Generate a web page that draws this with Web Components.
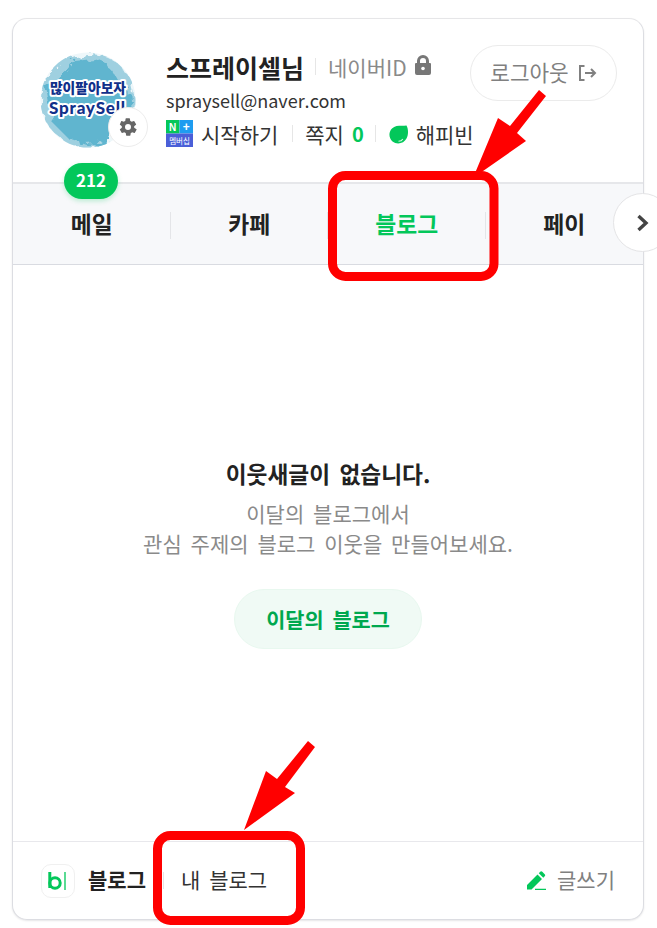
<!DOCTYPE html>
<html lang="ko">
<head>
<meta charset="utf-8">
<title>네이버 프로필</title>
<style>
html,body{margin:0;height:928px;overflow:hidden;background:#fff}
body{font-family:"Noto Sans CJK KR","Noto Sans",sans-serif;color:#222;padding:18px 13px 0 12px;box-sizing:border-box;position:relative}
</style>
</head>
<body>
<nv-card>
  <nv-profile slot="top" name="스프레이셀님" email="spraysell@naver.com"></nv-profile>
  <nv-tabs slot="top" count="212">
    <nv-tab>메일</nv-tab>
    <nv-tab>카페</nv-tab>
    <nv-tab active>블로그</nv-tab>
    <nv-tab last>페이</nv-tab>
  </nv-tabs>
  <nv-empty title-text="이웃새글이 없습니다." action="이달의 블로그">이달의 블로그에서<br>관심 주제의 블로그 이웃을 만들어보세요.</nv-empty>
  <nv-footer slot="bottom"></nv-footer>
</nv-card>
<nv-marks></nv-marks>

<script>
const card_template = document.createElement('template');
card_template.innerHTML = `
<style>
:host{display:flex;flex-direction:column;width:632px;height:902px;box-sizing:border-box;border:1px solid #dcdde2;border-top-color:#e6e6e8;border-radius:15px;background:#fff;box-shadow:0 1px 2px rgba(0,0,20,.10)}
main{flex:1;display:flex;min-height:0}
</style>
<slot name="top"></slot>
<main><slot></slot></main>
<slot name="bottom"></slot>`;

class nvCard extends HTMLElement{
  constructor(){
    super();
    this.attachShadow({mode:"open"});
    this.shadowRoot.appendChild(card_template.content.cloneNode(true));
  }
}

const profile_template = document.createElement('template');
profile_template.innerHTML = `
<style>
:host{display:flex;height:163px;box-sizing:border-box;padding:30px 26px 0 27px;color:#222}
#photo{position:relative;width:96px;height:96px;margin-top:3px;flex:none}
#photo svg{display:block}
#gear{position:absolute;left:68px;top:55px;width:40px;height:40px;box-sizing:border-box;border:1px solid #ececec;border-radius:50%;background:#fff;display:flex;align-items:center;justify-content:center}
#info{flex:1;margin-left:30px;min-width:0}
.row{display:flex;align-items:center;white-space:nowrap}
#first{height:35px}
#name{font-size:25px;font-weight:700}
.sep{width:1px;height:17px;background:#e6e6e6;flex:none}
#first .sep{margin:0 12px 0 11px}
#naver{font-size:21px;color:#8a8a8a}
#first svg{margin-left:7px;margin-top:-3px}
#email{height:31px;font-size:18px;color:#333}
#third{height:37px;font-size:21px;color:#333}
#third .sep{margin:0 13px 0 11px}
#third #sep1{margin:0 12px 0 14px}
#plus{margin-right:8px;flex:none}
#zero{color:#03c75a;font-weight:700;margin-left:8px;font-size:20px}
#leaf{margin-right:8px;flex:none}
#logout{flex:none;align-self:flex-start;margin-top:-4px;width:147px;height:56px;box-sizing:border-box;border:1px solid #ebebeb;border-radius:28px;background:#fff;display:flex;align-items:center;justify-content:center;gap:9px;font-size:21.300px;color:#808080;font-family:inherit;padding:0}
#logout span{padding-bottom:3px}
</style>
<div id="photo">
  <svg width="96" height="96" viewBox="0 0 96 96">
    <defs>
      <clipPath id="round"><circle cx="48" cy="48" r="47.500"/></clipPath>
      <filter id="rough" x="-10%" y="-10%" width="120%" height="120%">
        <feTurbulence type="fractalNoise" baseFrequency="0.09" numOctaves="3" seed="7"/>
        <feDisplacementMap in="SourceGraphic" scale="18"/>
      </filter>
    </defs>
    <g clip-path="url(#round)">
      <rect width="96" height="96" fill="#eef7fa"/>
      <g filter="url(#rough)">
        <circle cx="48" cy="48" r="47" fill="#9fd0e0"/>
      </g>
      <g filter="url(#rough)">
        <path d="M8 36 24 22 34 8 52 6 68 12 76 26 90 36 92 62 78 72 72 90 46 92 28 86 14 72Z" fill="#61b5cf"/>
      </g>
      <text x="48" y="41" text-anchor="middle" font-family="Noto Sans CJK KR" font-weight="900" font-size="13.800" fill="#11308a" stroke="#fff" stroke-width="4" stroke-linejoin="round" paint-order="stroke">많이팔아보자</text>
      <text x="9" y="62" font-family="Lato" font-weight="900" font-size="17" fill="#11308a" stroke="#fff" stroke-width="4" stroke-linejoin="round" paint-order="stroke" letter-spacing="0.800">SpraySell</text>
    </g>
  </svg>
  <span id="gear">
    <svg width="20" height="20" viewBox="0 0 24 24"><path fill="#666" fill-rule="evenodd" d="M19.400 13a7.600 7.600 0 0 0 0-2l2.200-1.700a.5.5 0 0 0 .1-.7l-2.100-3.600a.5.5 0 0 0-.6-.2l-2.600 1a7.600 7.600 0 0 0-1.700-1l-.4-2.800a.5.5 0 0 0-.5-.4H9.600a.5.5 0 0 0-.5.4l-.4 2.800a7.600 7.600 0 0 0-1.700 1l-2.600-1a.5.5 0 0 0-.6.2L2.300 8.600a.5.5 0 0 0 .1.7L4.600 11a7.600 7.600 0 0 0 0 2l-2.200 1.700a.5.5 0 0 0-.1.7l2.100 3.600c.1.2.4.3.6.2l2.600-1c.5.4 1.100.7 1.700 1l.4 2.800c0 .2.3.4.5.4h4.200c.2 0 .5-.2.5-.4l.4-2.800c.6-.3 1.200-.6 1.700-1l2.600 1c.2.1.5 0 .6-.2l2.100-3.600a.5.5 0 0 0-.1-.7ZM12 15.600a3.600 3.600 0 1 1 0-7.200 3.600 3.600 0 0 1 0 7.200Z"/></svg>
  </span>
</div>
<div id="info">
  <div class="row" id="first">
    <span id="name"></span><i class="sep"></i><span id="naver">네이버ID</span>
    <svg width="18" height="20" viewBox="0 0 18 20"><path fill="#777" d="M3 8V6a6 6 0 0 1 12 0v2h1a1 1 0 0 1 1 1v9a2 2 0 0 1-2 2H3a2 2 0 0 1-2-2V9a1 1 0 0 1 1-1Zm3 0h6V6a3 3 0 0 0-6 0Z"/><circle cx="9" cy="13.500" r="1.800" fill="#fff"/></svg>
  </div>
  <div class="row" id="email"></div>
  <div class="row" id="third">
    <svg id="plus" width="27" height="27" viewBox="0 0 27 27">
      <rect width="13.500" height="13.500" fill="#03c75a"/><rect x="13.500" width="13.500" height="13.500" fill="#1e9cf0"/><rect y="13.500" width="27" height="13.500" fill="#4a5fd8"/>
      <text x="6.700" y="10.500" text-anchor="middle" font-family="Liberation Sans" font-weight="700" font-size="10" fill="#fff">N</text>
      <text x="20.200" y="11" text-anchor="middle" font-family="Liberation Sans" font-weight="700" font-size="12" fill="#fff">+</text>
      <text x="13.500" y="24" text-anchor="middle" font-family="Noto Sans CJK KR" font-size="7.500" fill="#fff">멤버십</text>
    </svg>
    <span>시작하기</span><i class="sep" id="sep1"></i><span>쪽지</span><span id="zero">0</span><i class="sep"></i>
    <svg id="leaf" width="19" height="20" viewBox="0 0 19 20"><path fill="#03c75a" d="M17.500 1.500C19.500 5 19.500 11 17.500 14.500 15 19.500 8 21 3.500 17.500-.5 14-.5 8 3 4.500 7 .5 13 2.500 17.500 1.500Z"/><path fill="none" stroke="#d5f6e3" stroke-width="1.100" d="M9.500 17.300c2 0 3.600-.9 4.300-2.300"/></svg>
    <span>해피빈</span>
  </div>
</div>
<button id="logout" type="button">
  <span>로그아웃</span>
  <svg width="19" height="18" viewBox="0 0 19 18" fill="none" stroke="#808080" stroke-width="2"><path d="M6.500 2H2v14h4.500"/><path d="M7 9h10M13 5l4 4-4 4"/></svg>
</button>`;

class nvProfile extends HTMLElement{
  constructor(){
    super();
    this.attachShadow({mode:"open"});
    this.shadowRoot.appendChild(profile_template.content.cloneNode(true));
    this.shadowRoot.getElementById("name").innerText = this.getAttribute("name");
    this.shadowRoot.getElementById("email").innerText = this.getAttribute("email");
  }
}

const tabs_template = document.createElement('template');
tabs_template.innerHTML = `
<style>
:host{display:flex;position:relative;height:83px;box-sizing:border-box;background:#f7f8fa;border-top:2px solid #e6e7ea;border-bottom:1px solid #d9dbe1}
#count{position:absolute;left:51px;top:-21px;width:54px;height:36px;box-sizing:border-box;padding-bottom:3px;border-radius:18px;background:#03c75a;color:#fff;font-size:17px;font-weight:700;display:flex;align-items:center;justify-content:center;box-shadow:0 2px 5px rgba(3,199,90,.25)}
#next{position:absolute;left:600px;top:9px;width:59px;height:59px;box-sizing:border-box;border:1px solid #e4e4e6;border-radius:50%;background:#fff;display:flex;align-items:center;padding:0 0 0 22px}
</style>
<slot></slot>
<span id="count"></span>
<span id="next"><svg width="14" height="18" viewBox="0 0 14 18" fill="none" stroke="#444" stroke-width="3.400"><path d="M2.500 2l7.500 7-7.500 7"/></svg></span>`;

class nvTabs extends HTMLElement{
  constructor(){
    super();
    this.attachShadow({mode:"open"});
    this.shadowRoot.appendChild(tabs_template.content.cloneNode(true));
    this.shadowRoot.getElementById("count").innerText = this.getAttribute("count");
  }
}

const tab_template = document.createElement('template');
tab_template.innerHTML = `
<style>
:host{flex:1;display:flex;align-items:center;justify-content:center;position:relative;box-sizing:border-box;padding-bottom:2px;font-size:22.8px;font-weight:700;color:#222}
:host([active]){color:#03c75a}
:host::after{content:"";position:absolute;right:0;top:28px;height:27px;width:1px;background:#e4e5e8}
:host([last])::after{display:none}
</style>
<slot></slot>`;

class nvTab extends HTMLElement{
  constructor(){
    super();
    this.attachShadow({mode:"open"});
    this.shadowRoot.appendChild(tab_template.content.cloneNode(true));
  }
}

const empty_template = document.createElement('template');
empty_template.innerHTML = `
<style>
:host{flex:1;display:flex;flex-direction:column;align-items:center;padding-top:190px;text-align:center;word-spacing:3px}
h2{margin:0;font-size:22.7px;line-height:38px;font-weight:700;color:#222}
p{margin:5px 0 0;font-size:21px;line-height:30px;color:#8a8a8a}
button{margin-top:31px;width:188px;height:60px;box-sizing:border-box;border:1px solid #e8f8ef;border-radius:30px;background:#f0faf5;color:#00a84f;font-family:inherit;font-size:20.8px;word-spacing:3px;font-weight:700;padding:0}
</style>
<h2 id="title"></h2>
<p><slot></slot></p>
<button id="go" type="button"></button>`;

class nvEmpty extends HTMLElement{
  constructor(){
    super();
    this.attachShadow({mode:"open"});
    this.shadowRoot.appendChild(empty_template.content.cloneNode(true));
    this.shadowRoot.getElementById("title").innerText = this.getAttribute("title-text");
    this.shadowRoot.getElementById("go").innerText = this.getAttribute("action");
  }
}

const footer_template = document.createElement('template');
footer_template.innerHTML = `
<style>
:host{display:flex;align-items:center;height:78px;box-sizing:border-box;border-top:1px solid #e8e8ec;padding:0 28px 0 28px;font-size:21px;color:#333}
#logo{width:34px;height:34px;box-sizing:border-box;border:1px solid #f0f0f0;border-radius:10px;display:flex;align-items:center;justify-content:center;flex:none}
#blog{font-weight:700;margin-left:13px;color:#222;padding-bottom:3px}
i{width:1px;height:17px;background:#e4e4e4;margin:0 17px}
#mine{word-spacing:3px;padding-bottom:3px}
#write{margin-left:auto;display:flex;align-items:center;gap:11px;color:#808080}
#write span{padding-bottom:3px}
</style>
<span id="logo"><svg width="24" height="22" viewBox="0 0 24 22"><circle cx="9" cy="13" r="5.200" fill="none" stroke="#03c75a" stroke-width="3"/><path d="M3.800 2v16" stroke="#03c75a" stroke-width="3"/><path d="M19 2v18" stroke="#03c75a" stroke-width="1.300"/></svg></span>
<span id="blog">블로그</span><i></i><span id="mine">내 블로그</span>
<span id="write">
  <svg width="19" height="19" viewBox="0 0 19 19"><path fill="#03c75a" d="M0 18.500v-4.500L10.500 3.500l4.500 4.500L4.500 18.500ZM11.800 2.200 13.200.800a1.500 1.500 0 0 1 2.100 0l2.400 2.400a1.500 1.500 0 0 1 0 2.100l-1.400 1.400ZM8 17.700h11v1.300H8Z"/></svg>
  <span>글쓰기</span>
</span>`;

class nvFooter extends HTMLElement{
  constructor(){
    super();
    this.attachShadow({mode:"open"});
    this.shadowRoot.appendChild(footer_template.content.cloneNode(true));
  }
}

const marks_template = document.createElement('template');
marks_template.innerHTML = `
<style>
:host{position:absolute;left:0;top:0;width:657px;height:928px;pointer-events:none}
svg{display:block}
</style>
<svg width="657" height="928" viewBox="0 0 657 928">
  <g fill="none" stroke="#f00" stroke-width="9">
    <rect x="332.500" y="175.500" width="161.500" height="101" rx="13"/>
    <rect x="157.500" y="835.500" width="143" height="85" rx="13"/>
  </g>
  <g fill="#f00">
    <polygon points="473,178 498,118 510,126 539,90 546,96 517,133 526,141"/>
    <polygon points="244,830 266,771 277,779 308,741 315,747 285,787 295,793"/>
  </g>
</svg>`;

class nvMarks extends HTMLElement{
  constructor(){
    super();
    this.attachShadow({mode:"open"});
    this.shadowRoot.appendChild(marks_template.content.cloneNode(true));
  }
}

customElements.define("nv-card", nvCard);
customElements.define("nv-profile", nvProfile);
customElements.define("nv-tabs", nvTabs);
customElements.define("nv-tab", nvTab);
customElements.define("nv-empty", nvEmpty);
customElements.define("nv-footer", nvFooter);
customElements.define("nv-marks", nvMarks);
</script>
</body>
</html>
